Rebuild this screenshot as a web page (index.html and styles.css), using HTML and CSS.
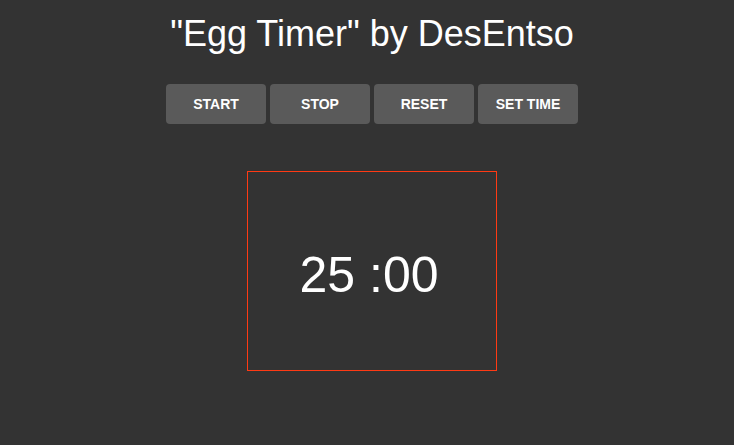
FILE: index.html
```html
<!DOCTYPE html>
<html>
<head>
<meta charset="utf-8">
<link rel="stylesheet" href="styles.css">
</head>
<body>
<div class="page">
  <h1 class="title">"Egg Timer" by DesEntso</h1>
  <div class="controls">
    <button class="btn">START</button>
    <button class="btn">STOP</button>
    <button class="btn">RESET</button>
    <button class="btn">SET TIME</button>
  </div>
  <div class="timer">
    <span class="time">25 :00</span>
  </div>
</div>
</body>
</html>
```
FILE: styles.css
```css
html, body {
  margin: 0;
  padding: 0;
  background: #333333;
  height: 100%;
}
.page {
  padding-left: 10px;
  padding-top: 13px;
  font-family: "Liberation Sans", Arial, sans-serif;
  color: #ffffff;
  display: flex;
  flex-direction: column;
  align-items: center;
}
.title {
  margin: 0;
  font-size: 36px;
  font-weight: normal;
  line-height: normal;
}
.controls {
  margin-top: 29px;
  display: flex;
  gap: 4px;
}
.btn {
  width: 100px;
  height: 40px;
  border: none;
  border-radius: 4px;
  background: #5a5a5a;
  color: #ffffff;
  font-family: "Liberation Sans", Arial, sans-serif;
  font-weight: bold;
  font-size: 14px;
  padding: 0;
}
.timer {
  margin-top: 47px;
  width: 250px;
  height: 200px;
  box-sizing: border-box;
  border: 1px solid #ff3a14;
  display: flex;
  align-items: center;
  justify-content: center;
}
.time {
  font-size: 50px;
  line-height: 1;
  margin-top: 8px;
  margin-right: 6px;
}
```
